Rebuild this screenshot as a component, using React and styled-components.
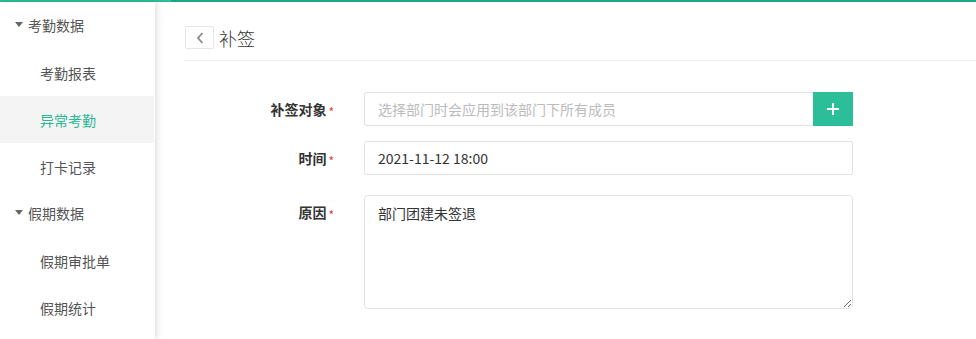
import React from 'react';
import styled, { createGlobalStyle } from 'styled-components';

const GlobalStyle = createGlobalStyle`
    body {
        margin: 0;
        background: #fff;
        font-family: "Microsoft YaHei", "Noto Sans CJK SC", "Noto Sans", sans-serif;
        color: #333;
    }
`

const menu = [
    { title: '考勤数据', items: ['考勤报表', '异常考勤', '打卡记录'] },
    { title: '假期数据', items: ['假期审批单', '假期统计'] },
];

const App = () => {
    return (
        <>
            <GlobalStyle />
            <TopBar />
            <Layout>
                <Sidebar>
                    {menu.map(group => (
                        <div key={group.title}>
                            <GroupTitle>
                                <Caret />
                                {group.title}
                            </GroupTitle>
                            {group.items.map(item => (
                                <MenuItem key={item} active={item === '异常考勤'}>{item}</MenuItem>
                            ))}
                        </div>
                    ))}
                </Sidebar>
                <Main>
                    <Header>
                        <BackButton>
                            <svg width="10" height="14" viewBox="0 0 10 14">
                                <polyline points="7.5,2 3,7 7.5,12" fill="none" stroke="#888" strokeWidth="1.8" />
                            </svg>
                        </BackButton>
                        <Title>补签</Title>
                    </Header>
                    <Form>
                        <Row>
                            <Label>补签对象<Star>*</Star></Label>
                            <InputGroup>
                                <Input placeholder="选择部门时会应用到该部门下所有成员" grouped />
                                <AddButton>
                                    <svg width="14" height="14" viewBox="0 0 14 14">
                                        <path d="M7 1v12M1 7h12" stroke="#fff" strokeWidth="2" />
                                    </svg>
                                </AddButton>
                            </InputGroup>
                        </Row>
                        <Row gap="20px">
                            <Label>时间<Star>*</Star></Label>
                            <Input defaultValue="2021-11-12 18:00" />
                        </Row>
                        <Row>
                            <Label>原因<Star>*</Star></Label>
                            <TextArea defaultValue="部门团建未签退" />
                        </Row>
                    </Form>
                </Main>
            </Layout>
        </>
    )
}

export default App;

const TopBar = styled.div`
    height: 2px;
    background: linear-gradient(to right, #2dbd97 171px, #1ea584 171px);
`

const Layout = styled.div`
    display: flex;
    height: 337px;
`

const Sidebar = styled.div`
    width: 155px;
    flex-shrink: 0;
    background: #fff;
    box-shadow: 2px 0 6px rgba(0, 0, 0, 0.13);
    position: relative;
    z-index: 1;
`

const GroupTitle = styled.div`
    height: 47px;
    display: flex;
    align-items: center;
    padding-left: 15px;
    padding-bottom: 2px;
    box-sizing: border-box;
    font-size: 14px;
    color: #555;
`

const Caret = styled.span`
    width: 0;
    height: 0;
    border-left: 4px solid transparent;
    border-right: 4px solid transparent;
    border-top: 5px solid #666;
    margin-right: 5px;
`

const MenuItem = styled.div`
    height: 47px;
    display: flex;
    align-items: center;
    padding-left: 40px;
    font-size: 14px;
    color: ${p => p.active ? '#2bb893' : '#555'};
    background: ${p => p.active ? '#f4f4f4' : 'transparent'};
    margin-right: 1px;
    cursor: pointer;
`

const Main = styled.div`
    flex: 1;
    padding-left: 29px;
`

const Header = styled.div`
    box-sizing: border-box;
    height: 59px;
    padding-top: 13px;
    display: flex;
    align-items: center;
    border-bottom: 1px solid #eee;
`

const BackButton = styled.div`
    width: 27px;
    height: 21px;
    border: 1px solid #e6e6e6;
    border-radius: 2px;
    display: flex;
    align-items: center;
    justify-content: center;
    margin-left: 1px;
    cursor: pointer;
`

const Title = styled.div`
    font-size: 18px;
    font-weight: 300;
    color: #333;
    margin-left: 5px;
    line-height: 24px;
`

const Form = styled.div`
    padding-top: 31px;
    width: 669px;
`

const Row = styled.div`
    display: flex;
    align-items: flex-start;
    margin-bottom: ${p => p.gap || '15px'};
`

const Label = styled.div`
    width: 150px;
    height: 34px;
    margin-right: 30px;
    flex-shrink: 0;
    text-align: right;
    font-size: 14px;
    font-weight: bold;
    color: #333;
    line-height: 34px;
`

const Star = styled.span`
    color: #e5383b;
    font-weight: normal;
    font-size: 12px;
    margin-left: 2px;
    position: relative;
    top: 2px;
`

const InputGroup = styled.div`
    display: flex;
    width: 489px;
`

const Input = styled.input`
    box-sizing: border-box;
    width: 489px;
    flex: ${p => p.grouped ? '1' : 'none'};
    min-width: 0;
    height: 34px;
    border: 1px solid #e2e2e2;
    border-right: ${p => p.grouped ? 'none' : '1px solid #e2e2e2'};
    border-radius: ${p => p.grouped ? '3px 0 0 3px' : '2px'};
    padding: 0 13px;
    font-family: inherit;
    font-size: 14px;
    color: #333;
    outline: none;

    &::placeholder {
        color: #bbb;
    }
`

const AddButton = styled.div`
    width: 40px;
    height: 34px;
    flex-shrink: 0;
    background: #2bbe98;
    display: flex;
    align-items: center;
    justify-content: center;
    cursor: pointer;
`

const TextArea = styled.textarea`
    box-sizing: border-box;
    width: 489px;
    height: 114px;
    border: 1px solid #e2e2e2;
    border-radius: 4px;
    padding: 7px 13px;
    font-family: inherit;
    font-size: 14px;
    line-height: 20px;
    color: #333;
    outline: none;
`
